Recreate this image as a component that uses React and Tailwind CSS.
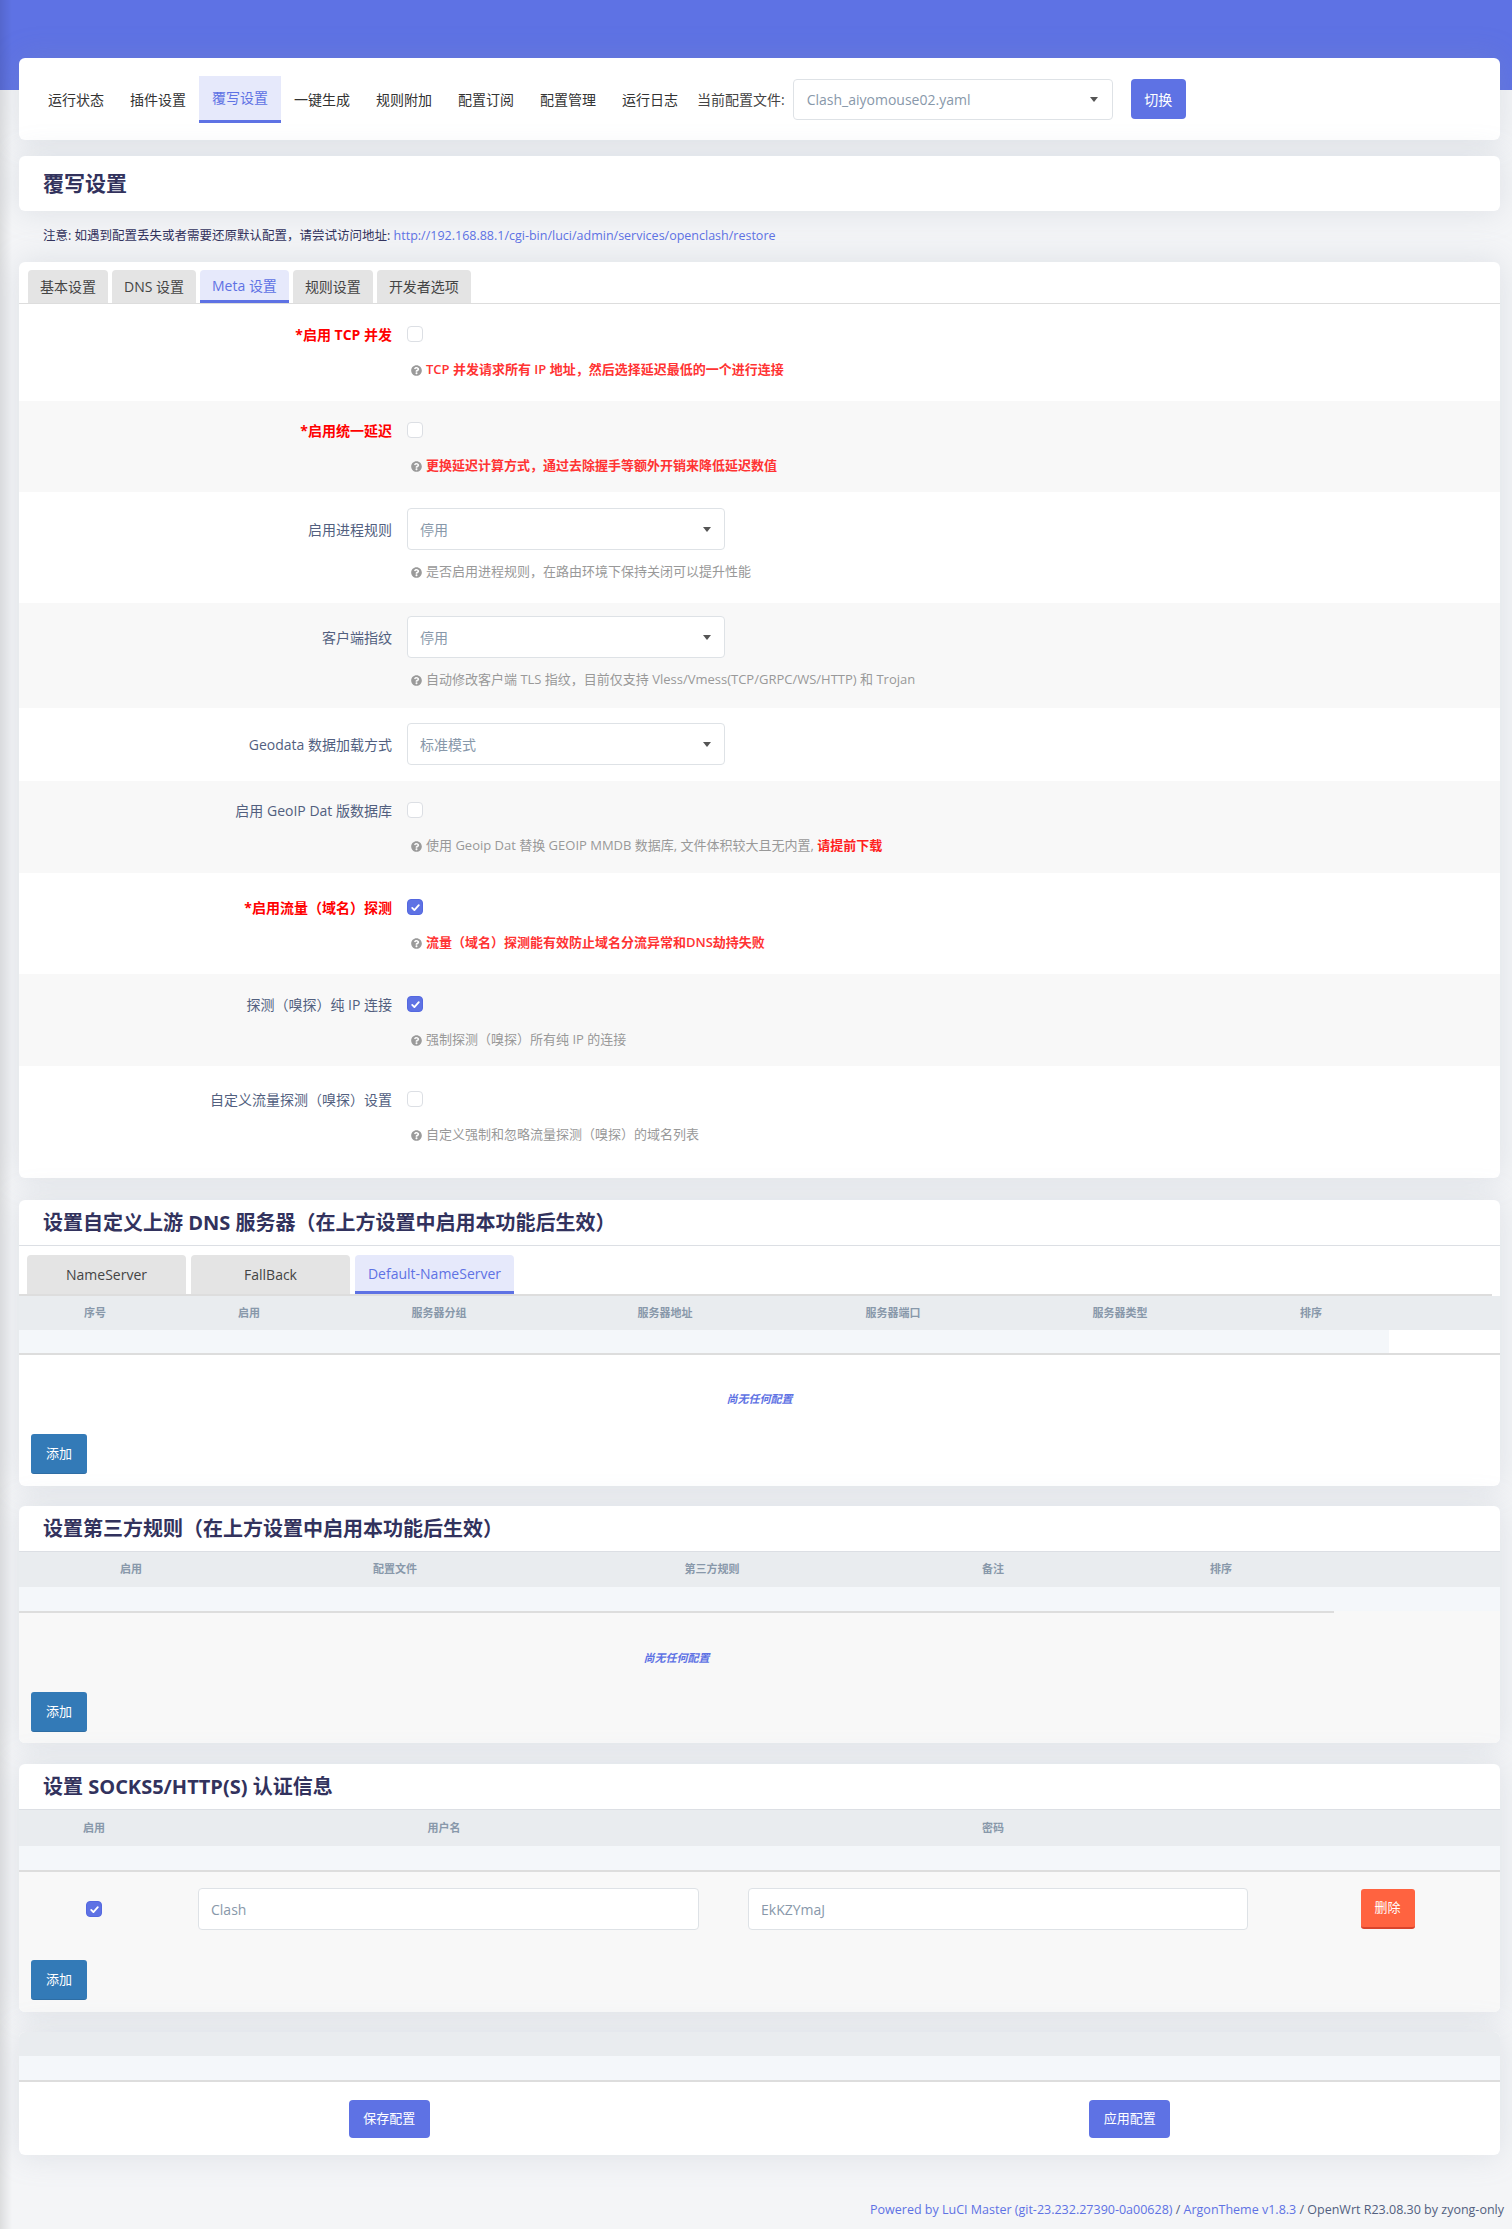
import React from 'react';
import { FaQuestionCircle } from 'react-icons/fa';

const navItems = ['运行状态', '插件设置', '覆写设置', '一键生成', '规则附加', '配置订阅', '配置管理', '运行日志'];
const metaTabs = ['基本设置', 'DNS 设置', 'Meta 设置', '规则设置', '开发者选项'];

// 复选框
const Checkbox = ({ checked }) =>
    checked ? (
        <span className="flex h-4 w-4 items-center justify-center rounded-[4px] border border-[#5468e0] bg-[#5e72e4]">
            <svg viewBox="0 0 12 12" className="h-[11px] w-[11px]">
                <path d="M2.4 6.4l2.4 2.4 4.8-5.4" stroke="#fff" strokeWidth="2" fill="none" strokeLinecap="round" strokeLinejoin="round" />
            </svg>
        </span>
    ) : (
        <span className="block h-4 w-4 rounded-[4px] border border-[#dcdfe4] bg-white" />
    );

const Caret = () => <span className="block h-0 w-0 border-x-[4px] border-t-[5px] border-x-transparent border-t-[#555]" />;

const Select = ({ value }) => (
    <div className="flex h-[42px] w-[318px] items-center justify-between rounded-[4px] border border-[#dee2e6] bg-white pl-3 pr-[13px] text-[14px] text-[#8898aa]">
        <span>{value}</span>
        <Caret />
    </div>
);

const Help = ({ children, red }) => (
    <div className={`ml-[392px] mt-3 flex h-5 items-center gap-[4px] text-[13px] ${red ? 'font-semibold text-[#ff3333]' : 'text-[#999]'}`}>
        <FaQuestionCircle className="h-[11px] w-[11px] shrink-0 text-[#9a9a9a]" />
        <span>{children}</span>
    </div>
);

const Row = ({ label, red, control, help, helpRed, gray, pad }) => (
    <div className={`${gray ? 'bg-[#f8f8f8]' : 'bg-white'} ${pad}`}>
        <div className="flex items-center">
            <div className={`w-[373px] text-right text-[14px] ${red ? 'font-bold text-[#ff0000]' : 'text-[#525f7f]'}`}>{label}</div>
            <div className="ml-[15px] flex min-h-[28px] items-center">{control}</div>
        </div>
        {help && <Help red={helpRed}>{help}</Help>}
    </div>
);

const Card = ({ children, className = '' }) => (
    <div className={`overflow-hidden rounded-[6px] bg-white shadow-[0_0_32px_0_rgba(136,152,170,0.22)] ${className}`}>{children}</div>
);

const SectionTitle = ({ children }) => (
    <div className="flex h-[46px] items-center border-b border-[#dcdfe4] pl-6 text-[20px] font-bold text-[#32325d]">{children}</div>
);

const AddButton = () => (
    <button className="ml-3 h-[40px] w-[56px] rounded-[3px] border-b border-[#2e6da4] bg-[#337ab7] text-[13px] text-white">添加</button>
);

const Empty = () => <div className="h-4 text-center text-[11px] font-semibold italic leading-4 text-[#5e72e4]">尚无任何配置</div>;

const HeadCell = ({ children }) => <div className="text-center text-[11px] font-semibold text-[#8898aa]">{children}</div>;

export default function App() {
    return (
        <div className="relative min-h-[2229px] bg-[#f4f5f7] font-['Open_Sans','Noto_Sans_CJK_SC',sans-serif] text-[#32325d]">
            <div className="h-[90px] bg-[#5e72e4]" />

            <div className="-mt-[32px] ml-[19px] mr-[12px] flex flex-col">
                {/* 顶部导航 */}
                <Card className="flex h-[82px] items-center pl-4">
                    {navItems.map((item) => (
                        <div
                            key={item}
                            className={`flex h-[47px] items-center px-[13px] text-[14px] ${
                                item === '覆写设置' ? 'border-b-[3px] border-[#5e72e4] bg-[#e6e9fb] text-[#5e72e4]' : 'text-[#333]'
                            }`}
                        >
                            {item}
                        </div>
                    ))}
                    <span className="ml-[6px] text-[14px] text-[#444]">当前配置文件:</span>
                    <div className="ml-[8px] flex h-[41px] w-[320px] items-center justify-between rounded-[4px] border border-[#dee2e6] pl-[13px] pr-[14px] text-[14px] text-[#8898aa]">
                        <span>Clash_aiyomouse02.yaml</span>
                        <Caret />
                    </div>
                    <button className="ml-[18px] h-[40px] w-[55px] rounded-[4px] bg-[#5e72e4] text-[14px] text-white">切换</button>
                </Card>

                {/* 标题 */}
                <Card className="mt-4 flex h-[55px] items-center pl-6">
                    <h2 className="text-[21px] font-bold text-[#32325d]">覆写设置</h2>
                </Card>
                <div className="flex h-[51px] items-center pl-6 text-[12.5px] text-[#32325d]">
                    注意: 如遇到配置丢失或者需要还原默认配置，请尝试访问地址:&nbsp;
                    <span className="text-[#5e72e4]">http://192.168.88.1/cgi-bin/luci/admin/services/openclash/restore</span>
                </div>

                {/* Meta 设置 */}
                <Card className="pb-[17px] pt-2">
                    <div className="flex gap-[4px] border-b border-[#dddddd] pl-[9px]">
                        {metaTabs.map((t) => (
                            <div
                                key={t}
                                className={`flex h-[33px] items-center rounded-t-[4px] px-3 text-[14px] ${
                                    t === 'Meta 设置' ? 'border-b-[3px] border-[#5e72e4] bg-[#e6e9fb] text-[#5e72e4]' : 'bg-[#e4e4e4] text-[#444]'
                                }`}
                            >
                                {t}
                            </div>
                        ))}
                    </div>

                    <Row label="*启用 TCP 并发" red control={<Checkbox />} help="TCP 并发请求所有 IP 地址，然后选择延迟最低的一个进行连接" helpRed pad="pt-4 pb-[21px]" />
                    <Row label="*启用统一延迟" red gray control={<Checkbox />} help="更换延迟计算方式，通过去除握手等额外开销来降低延迟数值" helpRed pad="pt-[15px] pb-4" />
                    <Row label="启用进程规则" control={<Select value="停用" />} help="是否启用进程规则，在路由环境下保持关闭可以提升性能" pad="pt-4 pb-[21px]" />
                    <Row label="客户端指纹" gray control={<Select value="停用" />} help="自动修改客户端 TLS 指纹，目前仅支持 Vless/Vmess(TCP/GRPC/WS/HTTP) 和 Trojan" pad="pt-[13px] pb-[18px]" />
                    <Row label="Geodata 数据加载方式" control={<Select value="标准模式" />} pad="pt-[15px] pb-4" />
                    <Row
                        label="启用 GeoIP Dat 版数据库"
                        gray
                        control={<Checkbox />}
                        help={
                            <>
                                使用 Geoip Dat 替换 GEOIP MMDB 数据库, 文件体积较大且无内置, <b className="text-[#ff2020]">请提前下载</b>
                            </>
                        }
                        pad="pt-[15px] pb-[17px]"
                    />
                    <Row label="*启用流量（域名）探测" red control={<Checkbox checked />} help="流量（域名）探测能有效防止域名分流异常和DNS劫持失败" helpRed pad="pt-5 pb-[21px]" />
                    <Row label="探测（嗅探）纯 IP 连接" gray control={<Checkbox checked />} help="强制探测（嗅探）所有纯 IP 的连接" pad="pt-4 pb-4" />
                    <Row label="自定义流量探测（嗅探）设置" control={<Checkbox />} help="自定义强制和忽略流量探测（嗅探）的域名列表" pad="pt-[19px] pb-4" />
                </Card>

                {/* DNS 服务器 */}
                <Card className="mt-[22px] pb-3">
                    <SectionTitle>设置自定义上游 DNS 服务器（在上方设置中启用本功能后生效）</SectionTitle>
                    <div className="mr-2 flex gap-[5px] border-b-2 border-[#dddddd] pl-2 pt-[9px]">
                        {['NameServer', 'FallBack', 'Default-NameServer'].map((t) => (
                            <div
                                key={t}
                                className={`flex h-[39px] w-[159px] items-center justify-center rounded-t-[4px] text-[14px] ${
                                    t === 'Default-NameServer' ? 'border-b-[3px] border-[#5e72e4] bg-[#e6e9fb] text-[#5e72e4]' : 'bg-[#e4e4e4] text-[#444]'
                                }`}
                            >
                                {t}
                            </div>
                        ))}
                    </div>
                    <div className="grid h-[34px] grid-cols-[152px_156px_224px_228px_228px_226px_156px_1fr] items-center bg-[#e9ecef]">
                        {['序号', '启用', '服务器分组', '服务器地址', '服务器端口', '服务器类型', '排序'].map((h) => (
                            <HeadCell key={h}>{h}</HeadCell>
                        ))}
                    </div>
                    <div className="flex h-[25px] border-b-2 border-[#dddddd]">
                        <div className="w-[1370px] bg-[#f4f7fa]" />
                    </div>
                    <div className="pt-9">
                        <Empty />
                    </div>
                    <div className="mt-[27px]">
                        <AddButton />
                    </div>
                </Card>

                {/* 第三方规则 */}
                <Card className="mt-5">
                    <SectionTitle>设置第三方规则（在上方设置中启用本功能后生效）</SectionTitle>
                    <div className="grid h-[35px] grid-cols-[224px_304px_330px_232px_224px_1fr] items-center bg-[#e9ecef]">
                        {['启用', '配置文件', '第三方规则', '备注', '排序'].map((h) => (
                            <HeadCell key={h}>{h}</HeadCell>
                        ))}
                    </div>
                    <div className="h-[24px] bg-[#f4f7fa]" />
                    <div className="bg-[#f8f8f8] pb-[11px]">
                        <div className="h-[2px] w-[1315px] bg-[#dddddd]" />
                        <div className="w-[1315px] pt-[37px]">
                            <Empty />
                        </div>
                        <div className="mt-[26px]">
                            <AddButton />
                        </div>
                    </div>
                </Card>

                {/* SOCKS5 */}
                <Card className="mt-[21px]">
                    <SectionTitle>设置 SOCKS5/HTTP(S) 认证信息</SectionTitle>
                    <div className="grid h-[36px] grid-cols-[150px_550px_548px_1fr] items-center bg-[#e9ecef]">
                        <HeadCell>启用</HeadCell>
                        <HeadCell>用户名</HeadCell>
                        <HeadCell>密码</HeadCell>
                    </div>
                    <div className="h-[26px] border-b-2 border-[#dddddd] bg-[#f4f7fa]" />
                    <div className="bg-[#f8f8f8] pb-3 pt-4">
                        <div className="grid grid-cols-[150px_550px_548px_1fr] items-center">
                            <div className="flex justify-center">
                                <Checkbox checked />
                            </div>
                            <div className="pl-[29px] pr-5">
                                <div className="flex h-[42px] items-center rounded-[4px] border border-[#dee2e6] bg-white pl-3 text-[14px] text-[#8898aa]">Clash</div>
                            </div>
                            <div className="pl-[29px] pr-[19px]">
                                <div className="flex h-[42px] items-center rounded-[4px] border border-[#dee2e6] bg-white pl-3 text-[14px] text-[#8898aa]">EkKZYmaJ</div>
                            </div>
                            <div className="flex justify-center pl-2">
                                <button className="h-[40px] w-[54px] rounded-[3px] border-b-2 border-[#d9442c] bg-[#ff6340] text-[13px] text-white">删除</button>
                            </div>
                        </div>
                        <div className="mt-[30px]">
                            <AddButton />
                        </div>
                    </div>
                </Card>

                {/* 保存 / 应用 */}
                <Card className="mt-5">
                    <div className="h-[24px] bg-[#e9ecef]" />
                    <div className="h-[26px] border-b-2 border-[#dddddd] bg-[#f4f7fa]" />
                    <div className="grid grid-cols-2 pb-[17px] pt-[18px]">
                        <div className="flex justify-center">
                            <button className="h-[38px] w-[81px] rounded-[4px] bg-[#5e72e4] text-[13px] text-white">保存配置</button>
                        </div>
                        <div className="flex justify-center">
                            <button className="h-[38px] w-[81px] rounded-[4px] bg-[#5e72e4] text-[13px] text-white">应用配置</button>
                        </div>
                    </div>
                </Card>
            </div>

            <footer className="mt-[47px] pr-2 text-right text-[12.5px] leading-4 text-[#525f7f]">
                <span className="text-[#5e72e4]">Powered by LuCI Master (git-23.232.27390-0a00628)</span> /{' '}
                <span className="text-[#5e72e4]">ArgonTheme v1.8.3</span> / OpenWrt R23.08.30 by zyong-only
            </footer>

            <div className="pointer-events-none absolute inset-y-0 left-0 w-[12px] bg-linear-to-r from-black/10 to-transparent" />
        </div>
    );
}
